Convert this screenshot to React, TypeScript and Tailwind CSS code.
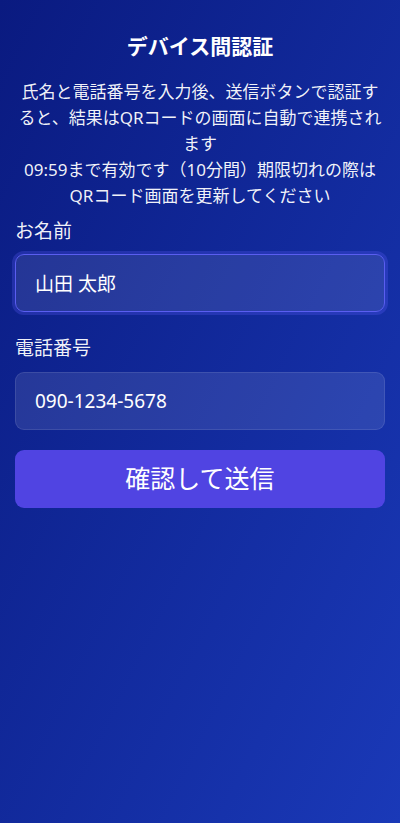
import React, { useState } from "react";

export default function App() {
    const [name, setName] = useState("山田 太郎");
    const [phone, setPhone] = useState("090-1234-5678");

    return (
        <div
            className="min-h-[823px] w-full bg-gradient-to-br from-[#0a1a80] to-[#1a39b8] px-[15px] pt-[31px] text-white"
            style={{ fontFamily: '"Noto Sans", "Noto Sans CJK JP", sans-serif' }}
        >
            <h1 className="text-center text-[21px] font-bold leading-[30px]">デバイス間認証</h1>

            <p className="mt-[18px] text-center text-[17px] leading-[26px] text-white/95">
                氏名と電話番号を入力後、送信ボタンで認証すると、結果はQRコードの画面に自動で連携されます
                <br />
                09:59まで有効です（10分間）期限切れの際はQRコード画面を更新してください
            </p>

            <form className="mt-[8px] flex flex-col" onSubmit={(e) => e.preventDefault()}>
                <label className="text-[19px] leading-[28px] text-white/95">お名前</label>
                <input
                    value={name}
                    onChange={(e) => setName(e.target.value)}
                    className="mt-[9px] h-[58px] w-full rounded-[9px] border border-[#5a5ef0] bg-white/10 px-[19px] text-[19px] text-white outline-none ring-[3px] ring-indigo-500/25"
                />

                <label className="mt-[22px] text-[19px] leading-[28px] text-white/95">電話番号</label>
                <input
                    value={phone}
                    onChange={(e) => setPhone(e.target.value)}
                    className="mt-[10px] h-[58px] w-full rounded-[9px] border border-white/10 bg-white/10 px-[19px] text-[19px] text-white outline-none"
                />

                <button
                    type="submit"
                    className="mt-[20px] h-[58px] w-full rounded-[9px] bg-[#5044e2] text-[25px] font-normal text-white"
                >
                    確認して送信
                </button>
            </form>
        </div>
    );
}
